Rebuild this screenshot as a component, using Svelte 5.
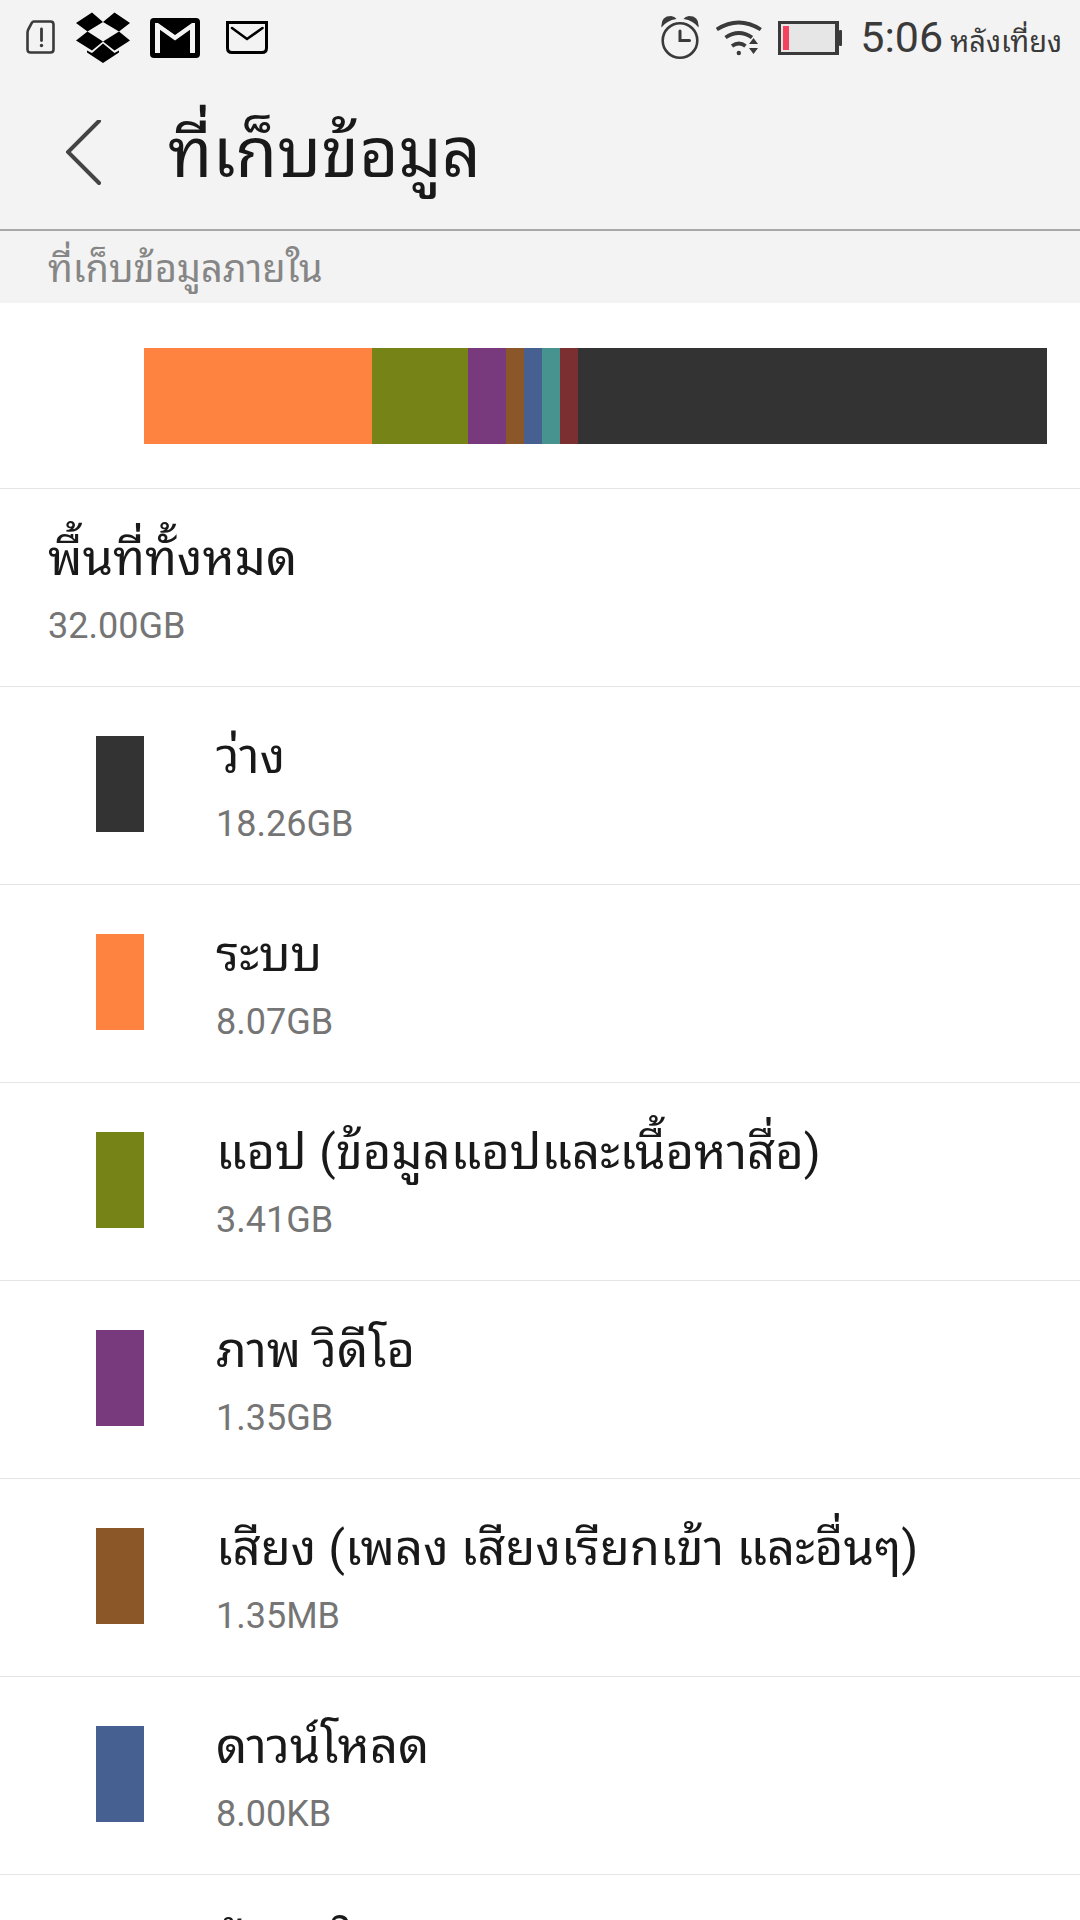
<script>
    const segments = [
        { color: '#ff8340', size: 228 },
        { color: '#758317', size: 96 },
        { color: '#783a7c', size: 38 },
        { color: '#8b5628', size: 18 },
        { color: '#466091', size: 18 },
        { color: '#479390', size: 18 },
        { color: '#7c2f30', size: 18 },
        { color: '#333333', size: 469 }
    ];

    const items = [
        { name: 'ว่าง', size: '18.26GB', color: '#333333' },
        { name: 'ระบบ', size: '8.07GB', color: '#ff8340' },
        { name: 'แอป (ข้อมูลแอปและเนื้อหาสื่อ)', size: '3.41GB', color: '#758317' },
        { name: 'ภาพ วิดีโอ', size: '1.35GB', color: '#783a7c' },
        { name: 'เสียง (เพลง เสียงเรียกเข้า และอื่นๆ)', size: '1.35MB', color: '#8b5628' },
        { name: 'ดาวน์โหลด', size: '8.00KB', color: '#466091' },
        { name: 'ข้อมูลในแคช', size: '', color: '#479390' }
    ];
</script>

<div class="screen">
    <div class="status">
        <div class="icons">
            <svg class="sim" width="32" height="36" viewBox="0 0 32 36">
                <path d="M9 1.500H25.500Q28.500 1.500 28.500 4.500V29.500Q28.500 32.500 25.500 32.500H5.500Q2.500 32.500 2.500 29.500V13Q2.500 11 3.300 9.400L6.500 3.300Q7.500 1.500 9 1.500Z" fill="none" stroke="#3a3a3a" stroke-width="2.600" />
                <path d="M16.500 9V20.500" stroke="#3a3a3a" stroke-width="2.800" stroke-linecap="round" />
                <circle cx="16.500" cy="25.500" r="1.700" fill="#3a3a3a" />
            </svg>
            <svg class="dropbox" width="56" height="52" viewBox="0 0 56 52">
                <path d="M17 .5L28 10L12.500 19.500L1 11ZM39.500 .5L55 11L44 19.500L28 10ZM12.500 19.500L28 29.500L17 38.500L1 28.500ZM44 19.500L55 28.500L39.500 38.500L28 29.500Z" />
                <path d="M28 31.500L39.500 41L44 38.500V40.500L28 51L12 40.500V38.500L17 41Z" />
            </svg>
            <svg class="gmail" width="50" height="40" viewBox="0 0 50 40">
                <rect width="50" height="40" rx="4" />
                <path d="M7.500 35V7L25 19.500L42.500 7V35" fill="none" stroke="#f3f3f3" stroke-width="5" />
                <path d="M5 0H45V5H42L25 17L8 5H5Z" />
            </svg>
            <svg width="42" height="34" viewBox="0 0 42 34">
                <path d="M1.500 1.500H40.500V27Q40.500 31.500 36 31.500H6Q1.500 31.500 1.500 27Z" fill="none" stroke="#000" stroke-width="3" />
                <path d="M6 7L21 18L36.500 7" fill="none" stroke="#000" stroke-width="2.600" stroke-linecap="round" />
            </svg>
        </div>

        <div class="icons">
            <svg class="alarm" width="38" height="44" viewBox="0 0 38 44">
                <circle cx="19" cy="24.500" r="17.300" fill="none" stroke="#3a3a3a" stroke-width="2.600" />
                <path d="M19 15V24.500H28.500" fill="none" stroke="#3a3a3a" stroke-width="3" stroke-linecap="round" />
                <path d="M.5 11.500Q-.5 0 10 0Q14 .5 15.500 3Q5.500 4.500 .5 11.500ZM37.500 11.500Q38.500 0 28 0Q24 .5 22.500 3Q32.500 4.500 37.500 11.500Z" fill="#3a3a3a" />
            </svg>
            <svg class="wifi" width="46" height="36" viewBox="0 0 46 36">
                <g fill="none" stroke="#3a3a3a" stroke-width="3.800">
                    <path d="M.8 9.500Q22.500-4.500 44.800 9.500" />
                    <path d="M9.500 17.500Q23 8.500 36 17.500" />
                    <path d="M16 26Q23 21 29.500 26" />
                </g>
                <circle cx="22.800" cy="33" r="2.200" fill="#3a3a3a" />
                <path d="M33 24L37.500 18L42 24ZM33 28H42L37.500 34Z" fill="#3a3a3a" />
            </svg>
            <svg class="battery" width="64" height="34" viewBox="0 0 64 34">
                <rect x="1.500" y="1.500" width="58" height="31" fill="#e6e6e6" stroke="#3a3a3a" stroke-width="3" />
                <rect x="57" y="0" width="4" height="34" fill="#3a3a3a" />
                <rect x="61" y="9" width="3" height="16" rx="1" fill="#3a3a3a" />
                <rect x="5" y="5" width="6" height="24" fill="#f5425f" />
            </svg>
            <div class="clock">
                <span>5:06</span>
                <small>หลังเที่ยง</small>
            </div>
        </div>
    </div>

    <header>
        <button aria-label="กลับ">
            <svg width="36" height="66" viewBox="0 0 36 66">
                <path d="M33 1L2 32L33 63" fill="none" stroke="#444" stroke-width="4" stroke-linecap="round" />
            </svg>
        </button>
        <h1>ที่เก็บข้อมูล</h1>
    </header>

    <main>
        <h2>ที่เก็บข้อมูลภายใน</h2>

        <div class="usage">
            <div class="bar">
                {#each segments as segment}
                    <span style="flex-grow: {segment.size}; background-color: {segment.color}"></span>
                {/each}
            </div>
        </div>

        <ul>
            <li>
                <div class="text">
                    <h3>พื้นที่ทั้งหมด</h3>
                    <p>32.00GB</p>
                </div>
            </li>
            {#each items as item}
                <li class="item">
                    <span class="swatch" style="background-color: {item.color}"></span>
                    <div class="text">
                        <h3>{item.name}</h3>
                        <p>{item.size}</p>
                    </div>
                </li>
            {/each}
        </ul>
    </main>
</div>

<style>
    * {
        margin: 0;
        padding: 0;
        box-sizing: border-box;
    }

    .screen {
        --grey: #f3f3f3;
        --line: #e4e4e4;

        display: flex;
        flex-direction: column;
        height: 100vh;
        overflow: hidden;
        background-color: #fff;
        color: #191919;
        font-family: Roboto, "Noto Sans Thai Looped", "Droid Sans Thai", Loma, Waree, Garuda, "Noto Sans", sans-serif;
    }

    svg {
        display: block;
        flex-shrink: 0;
    }

    /* STATUS BAR */
    .status {
        display: flex;
        flex-shrink: 0;
        justify-content: space-between;
        height: 76px;
        padding: 0 18px 0 25px;
        background-color: var(--grey);
    }

    .icons {
        display: flex;
        align-items: center;
    }

    .sim {
        margin-right: 18px;
    }

    .dropbox {
        margin-right: 19px;
    }

    .gmail {
        margin-right: 26px;
    }

    .alarm {
        margin-right: 17px;
    }

    .wifi {
        margin-right: 16px;
    }

    .battery {
        margin-right: 18px;
    }

    .clock {
        display: flex;
        align-items: baseline;
        gap: 7px;
        padding-bottom: 2px;
        color: #3a3a3a;
        font-size: 43px;
        white-space: nowrap;
    }

    small {
        font-size: 29px;
    }

    /* HEADER */
    header {
        display: flex;
        flex-shrink: 0;
        align-items: center;
        height: 155px;
        padding-left: 66px;
        background-color: var(--grey);
        border-bottom: 2px solid #a8a8a8;
    }

    button {
        margin-right: 66px;
        border: none;
        background: none;
    }

    h1 {
        padding-top: 2px;
        font-size: 68px;
        font-weight: 400;
        line-height: 80px;
    }

    main {
        flex: 1;
        min-height: 0;
        overflow: hidden;
    }

    h2 {
        height: 72px;
        padding-left: 48px;
        background-color: var(--grey);
        color: #868686;
        font-size: 38px;
        font-weight: 400;
        line-height: 76px;
    }

    /* USAGE BAR */
    .usage {
        padding: 45px 33px 44px 144px;
        border-bottom: 1px solid var(--line);
    }

    .bar {
        display: flex;
        height: 96px;
    }

    .bar span {
        flex-basis: 0;
    }

    /* LIST */
    ul {
        list-style-type: none;
    }

    li {
        display: flex;
        align-items: flex-start;
        height: 198px;
        padding: 34px 48px 0;
        border-bottom: 1px solid var(--line);
    }

    .item {
        padding-left: 96px;
    }

    .swatch {
        width: 48px;
        height: 96px;
        margin: 15px 72px 0 0;
    }

    h3 {
        font-size: 49px;
        font-weight: 400;
        line-height: 72px;
        white-space: nowrap;
    }

    p {
        color: #757575;
        font-size: 36px;
        line-height: 62px;
    }
</style>
